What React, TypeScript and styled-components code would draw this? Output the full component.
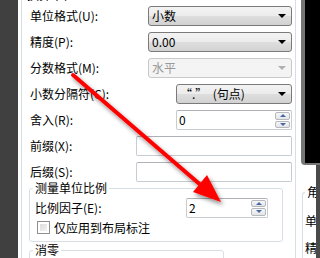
import React from 'react';
import styled, { createGlobalStyle } from 'styled-components';

const GlobalStyle = createGlobalStyle`
  html, body {
    margin: 0;
    padding: 0;
    background: #ffffff;
  }
`;

const Frame = styled.div`
  position: relative;
  display: flex;
  width: 320px;
  height: 258px;
  overflow: hidden;
  background: #ffffff;
  font-family: "Noto Sans CJK SC", "DejaVu Sans", sans-serif;
  font-size: 12px;
  color: #000000;
`;

const SideStrip = styled.div`
  flex: none;
  width: 18px;
  background: #404040;
`;

const Dialog = styled.div`
  flex: none;
  width: 283px;
  box-sizing: border-box;
  padding: 0 5px 0 3px;
  background: #ffffff;
`;

const Group = styled.fieldset<{ $top?: number; $left?: number; $right?: number; $width?: number }>`
  margin: ${(p) => p.$top ?? 0}px ${(p) => p.$right ?? 0}px 0 ${(p) => p.$left ?? 0}px;
  padding: 0 3px 6px 3px;
  min-width: 0;
  ${(p) => (p.$width ? `width: ${p.$width}px;` : '')}
  box-sizing: border-box;
  border: 1px solid #d5dfe5;
  border-radius: 3px;
`;

const Legend = styled.legend`
  padding: 0 2px;
  line-height: 16px;
  height: 16px;
`;

const Row = styled.div<{ $h?: number }>`
  display: flex;
  align-items: center;
  height: ${(p) => p.$h ?? 26}px;
`;

const Label = styled.span<{ $pad?: number }>`
  padding-left: ${(p) => p.$pad ?? 5}px;
  white-space: nowrap;
  line-height: 14px;
`;

const SelectBox = styled.div<{ $width: number; $disabled?: boolean }>`
  display: flex;
  align-items: center;
  margin-left: auto;
  width: ${(p) => p.$width}px;
  height: 20px;
  box-sizing: border-box;
  padding: 0 5px 0 3px;
  border: 1px solid ${(p) => (p.$disabled ? '#c9c9c9' : '#7a7a7a')};
  border-radius: 3px;
  background: ${(p) =>
    p.$disabled
      ? '#f4f4f4'
      : 'linear-gradient(#f3f3f3 0%, #ececec 48%, #dedede 52%, #d2d2d2 100%)'};
  color: ${(p) => (p.$disabled ? '#9a9a9a' : '#000000')};
`;

const SelectText = styled.span`
  flex: 1;
  white-space: pre;
  line-height: 14px;
`;

const Caret = styled.span<{ $disabled?: boolean }>`
  width: 0;
  height: 0;
  border-left: 4px solid transparent;
  border-right: 4px solid transparent;
  border-top: 4px solid ${(p) => (p.$disabled ? '#b0b0b0' : '#000000')};
`;

const TextBox = styled.div<{ $width: number; $right?: number }>`
  display: flex;
  align-items: center;
  margin-left: auto;
  margin-right: ${(p) => p.$right ?? 0}px;
  width: ${(p) => p.$width}px;
  height: 20px;
  box-sizing: border-box;
  padding-left: 2px;
  border: 1px solid #c7ccd2;
  border-top-color: #aeb2b8;
  border-radius: 2px;
  background: #ffffff;
`;

const BoxValue = styled.span`
  flex: 1;
  line-height: 14px;
`;

const SpinCol = styled.div`
  display: flex;
  flex-direction: column;
  gap: 1px;
  align-self: stretch;
  padding: 1px 1px 1px 0;
`;

const SpinBtn = styled.div<{ $down?: boolean }>`
  display: flex;
  align-items: center;
  justify-content: center;
  flex: 1;
  width: 15px;
  box-sizing: border-box;
  border: 1px solid #b5b8bd;
  border-radius: 2px;
  background: linear-gradient(#f7f7f7, #e2e4e8);

  &::after {
    content: '';
    width: 0;
    height: 0;
    border-left: 3px solid transparent;
    border-right: 3px solid transparent;
    ${(p) => (p.$down ? 'border-top: 3px solid #4a67a8;' : 'border-bottom: 3px solid #4a67a8;')}
  }
`;

const CheckRow = styled.div`
  display: flex;
  align-items: center;
  gap: 4px;
  height: 16px;
  padding-left: 4px;
`;

const CheckBox = styled.span`
  width: 13px;
  height: 13px;
  box-sizing: border-box;
  border: 1px solid #8e8f8f;
  background: linear-gradient(135deg, #d8d8d8, #f6f6f6);
  box-shadow: inset 0 0 0 2px #ffffff;
`;

const RightPane = styled.div`
  flex: none;
  width: 19px;
  display: flex;
  flex-direction: column;
`;

const BlackWin = styled.div`
  flex: none;
  height: 165px;
  box-sizing: border-box;
  background: #000000;
  border-left: 4px solid #767676;
  border-bottom: 2px solid #767676;
  border-bottom-left-radius: 4px;
`;

const LowerPane = styled.div`
  flex: 1;
  display: flex;
`;

const LowerContent = styled.div`
  flex: 1;
  padding-top: 19px;
  overflow: hidden;
`;

const EdgeStrip = styled.div`
  flex: none;
  width: 4px;
  background: #4a4a4a;
`;

const SideGroup = styled.fieldset`
  margin: 0 0 0 1px;
  padding: 7px 0 0 2px;
  min-width: 0;
  border: 1px solid #d5dfe5;
  border-right: none;
  border-radius: 3px 0 0 0;
  white-space: nowrap;
`;

const SideLine = styled.div`
  height: 27px;
  line-height: 27px;
`;

const ArrowLayer = styled.svg`
  position: absolute;
  left: 0;
  top: 0;
  pointer-events: none;
`;

const Select: React.FC<{ width: number; value: string; disabled?: boolean }> = ({ width, value, disabled }) => (
  <SelectBox $width={width} $disabled={disabled}>
    <SelectText>{value}</SelectText>
    <Caret $disabled={disabled} />
  </SelectBox>
);

const Spin: React.FC<{ width: number; value: string; right?: number }> = ({ width, value, right }) => (
  <TextBox $width={width} $right={right}>
    <BoxValue>{value}</BoxValue>
    <SpinCol>
      <SpinBtn />
      <SpinBtn $down />
    </SpinCol>
  </TextBox>
);

export default function App() {
  return (
    <>
      <GlobalStyle />
      <Frame>
        <SideStrip />
        <Dialog>
          <Group $top={-13}>
            <Legend>换算单位</Legend>
            <Row>
              <Label>单位格式(U):</Label>
              <Select width={144} value="小数" />
            </Row>
            <Row>
              <Label>精度(P):</Label>
              <Select width={144} value="0.00" />
            </Row>
            <Row>
              <Label>分数格式(M):</Label>
              <Select width={144} value="水平" disabled />
            </Row>
            <Row>
              <Label>小数分隔符(C):</Label>
              <Select width={116} value={'“.”  (句点)'} />
            </Row>
            <Row>
              <Label>舍入(R):</Label>
              <Spin width={116} value="0" />
            </Row>
            <Row>
              <Label>前缀(X):</Label>
              <TextBox $width={156} />
            </Row>
            <Row $h={25}>
              <Label>后缀(S):</Label>
              <TextBox $width={156} />
            </Row>

            <Group $top={-4} $left={4} $right={9}>
              <Legend>测量单位比例</Legend>
              <Row $h={23}>
                <Label $pad={2}>比例因子(E):</Label>
                <Spin width={82} value="2" right={11} />
              </Row>
              <CheckRow>
                <CheckBox />
                <span>仅应用到布局标注</span>
              </CheckRow>
            </Group>

            <Group $left={4} $width={195}>
              <Legend>消零</Legend>
            </Group>
          </Group>
        </Dialog>
        <RightPane>
          <BlackWin />
          <LowerPane>
            <LowerContent>
              <SideGroup>
                <Legend>角度标注</Legend>
                <SideLine>单位格式(A):</SideLine>
                <SideLine>精度(O):</SideLine>
              </SideGroup>
            </LowerContent>
            <EdgeStrip />
          </LowerPane>
        </RightPane>

        <ArrowLayer width="320" height="258" viewBox="0 0 320 258">
          <defs>
            <filter id="arrowShadow" x="-20%" y="-20%" width="140%" height="140%">
              <feDropShadow dx="2" dy="3" stdDeviation="2" floodColor="#000000" floodOpacity="0.45" />
            </filter>
          </defs>
          <g filter="url(#arrowShadow)">
            <line x1="73" y1="75" x2="203" y2="187" stroke="#ff0000" strokeWidth="4" strokeLinecap="round" />
            <polygon points="221,202 207,175 193,192" fill="#ff0000" />
          </g>
        </ArrowLayer>
      </Frame>
    </>
  );
}
